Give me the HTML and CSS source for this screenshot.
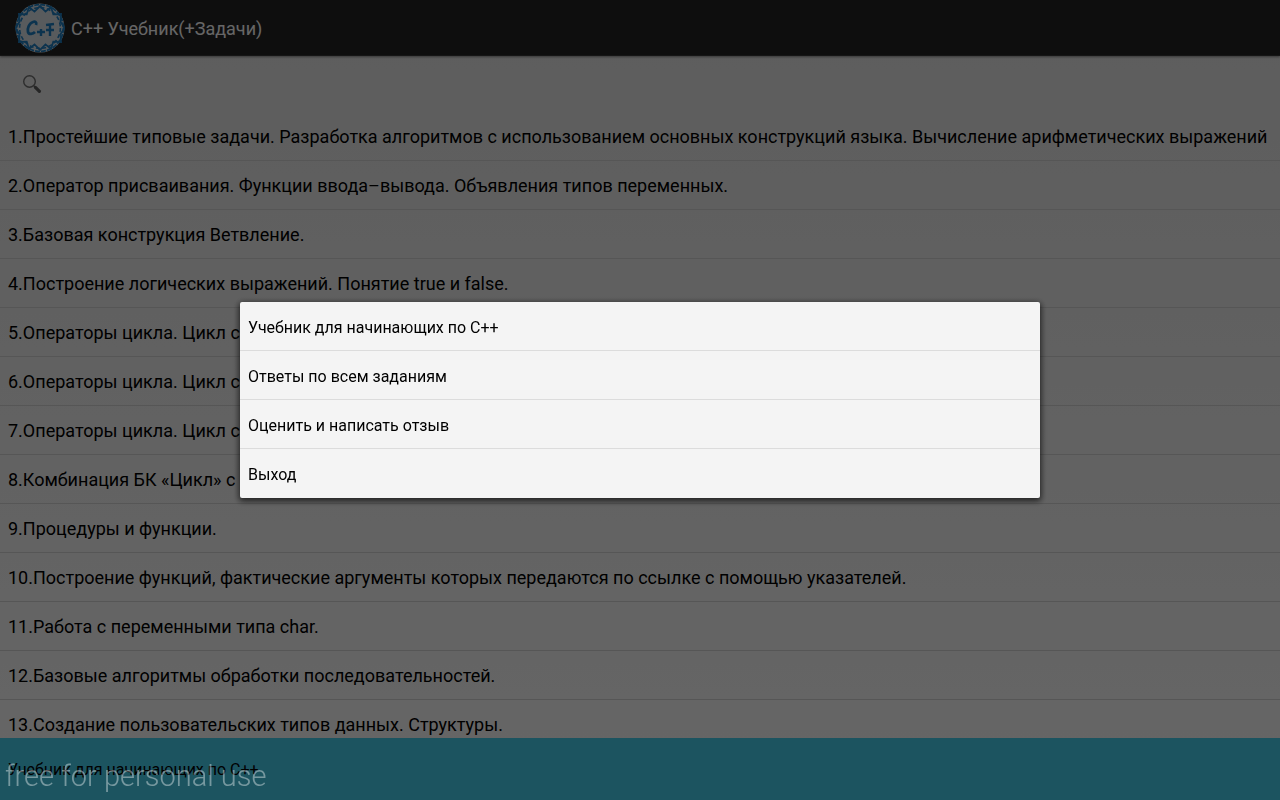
FILE: index.html
```html
<!DOCTYPE html>
<html lang="ru">
<head>
<meta charset="utf-8">
<title>C++ Учебник(+Задачи)</title>
<link rel="stylesheet" href="styles.css">
</head>
<body>
<div class="page">
  <header class="top">
    <svg class="logo" viewBox="0 0 50 50" aria-hidden="true">
      <circle cx="25" cy="25" r="24.5" fill="#dde3e8"/>
      <circle cx="25" cy="25" r="23.4" fill="none" stroke="#2080c4" stroke-width="1.8" stroke-dasharray="5 1.1"/>
      <g fill="none" stroke="#2080c4">
        <path stroke-width="1.8" d="M25 3l5.500 5.600 5.500-4.600 2.300 7.300 7.700-.3-.5 7.700 4 6.300-4 6.300.5 7.700-7.700-.3-2.300 7.300-5.500-4.600-5.500 5.600-5.500-5.600-5.500 4.600-2.300-7.300-7.700.3.5-7.700-4-6.300 4-6.300-.5-7.700 7.700.3 2.300-7.300 5.500 4.600z"/>
        <circle stroke-width="1.6" stroke-dasharray="4 2.400" cx="25" cy="25" r="20.400"/>
        <path stroke-width="2.800" d="M21 22c1-3-1-4-3-3-4 1-6 7-5 10 1 3 5 2 7 0"/>
        <path stroke-width="2.400" d="M22 29h8M26 26v7M31 27h8M35 22v11M31 22l8-1"/>
      </g>
    </svg>
    <h1 class="top-title">C++ Учебник(+Задачи)</h1>
  </header>
  <div class="search">
    <label class="search-label" for="search">
      <svg class="search-icon" viewBox="0 0 20 20" role="img" aria-label="Поиск">
        <circle cx="7.5" cy="7.5" r="5.8" fill="none" stroke="#707070" stroke-width="1.4"/>
        <path d="M11.8 11.8l2 2" stroke="#707070" stroke-width="1.6"/>
        <path d="M13.4 13.4l4 4" stroke="#606060" stroke-width="3.2" stroke-linecap="round"/>
      </svg>
    </label>
    <input type="text" class="search-text" id="search">
  </div>
  <ul class="list">
    <li>1.Простейшие типовые задачи. Разработка алгоритмов с использованием основных конструкций языка. Вычисление арифметических выражений</li>
    <li>2.Оператор присваивания. Функции ввода–вывода. Объявления типов переменных.</li>
    <li>3.Базовая конструкция Ветвление.</li>
    <li>4.Построение логических выражений. Понятие true и false.</li>
    <li>5.Операторы цикла. Цикл с</li>
    <li>6.Операторы цикла. Цикл с</li>
    <li>7.Операторы цикла. Цикл с</li>
    <li>8.Комбинация БК «Цикл» с</li>
    <li>9.Процедуры и функции.</li>
    <li>10.Построение функций, фактические аргументы которых передаются по ссылке с помощью указателей.</li>
    <li>11.Работа с переменными типа char.</li>
    <li>12.Базовые алгоритмы обработки последовательностей.</li>
    <li>13.Создание пользовательских типов данных. Структуры.</li>
  </ul>
  <footer class="bottom">Учебник для начинающих по C++</footer>
</div>
<div class="shade">
  <div class="menu" role="dialog" aria-label="Меню">
    <button type="button" class="menu-item">Учебник для начинающих по C++</button>
    <button type="button" class="menu-item">Ответы по всем заданиям</button>
    <button type="button" class="menu-item">Оценить и написать отзыв</button>
    <button type="button" class="menu-item">Выход</button>
  </div>
</div>
<div class="mark">free for personal use</div>
</body>
</html>
```

FILE: styles.css
```css
*{margin:0; padding:0; box-sizing:border-box;}
body{
	font-family:Roboto, "Noto Sans", sans-serif;
	color:#000;
}
.page{
	display:flex;
	flex-direction:column;
	height:100vh;
	overflow:hidden;
	background:linear-gradient(#e8e8e8, #ffffff);
}
.top{
	display:flex;
	align-items:center;
	flex:none;
	gap:6px;
	height:56px;
	padding-left:15px;
	background-color:#232323;
	border-bottom:1px solid #383838;
	box-shadow:0 1px 2px rgba(0,0,0,.4);
}
.logo{
	width:50px;
	height:50px;
}
.top-title{
	padding-top:2px;
	font-size:18px;
	font-weight:400;
	color:#fff;
}
.search{
	display:flex;
	align-items:center;
	flex:none;
	height:56px;
	padding:0 22px;
}
.search-icon{
	display:block;
	width:20px;
	height:20px;
}
.search-text{
	flex:1;
	height:40px;
	border:none;
	outline:none;
	background:none;
	font:inherit;
}
.list{
	flex:1;
	min-height:0;
	overflow:hidden;
	list-style:none;
}
.list li{
	height:49px;
	line-height:50px;
	padding-left:8px;
	font-size:18px;
	white-space:nowrap;
	border-bottom:1px solid #d8d8d8;
}
.bottom{
	flex:none;
	height:62px;
	line-height:64px;
	padding-left:8px;
	font-size:16px;
	background-color:#48d2f0;
}
/*****************************************/
.shade{
	position:fixed;
	top:0;
	left:0;
	width:100%;
	height:100%;
	display:flex;
	align-items:center;
	justify-content:center;
	background-color:rgba(0,0,0,.6);
}
.menu{
	width:800px;
	max-width:90%;
	background-color:#f4f4f4;
	border-radius:2px;
	box-shadow:0 2px 6px 1px rgba(0,0,0,.7);
}
.menu-item{
	display:block;
	width:100%;
	height:49px;
	padding:2px 0 0 8px;
	text-align:left;
	font-family:inherit;
	font-size:16px;
	color:#000;
	background:none;
	border:none;
	border-bottom:1px solid #dcdcdc;
	cursor:pointer;
}
.menu-item:last-child{
	border-bottom:none;
}
.mark{
	position:fixed;
	left:5px;
	bottom:4px;
	font-size:29px;
	line-height:40px;
	font-weight:300;
	color:rgba(255,255,255,.4);
	pointer-events:none;
}
```
